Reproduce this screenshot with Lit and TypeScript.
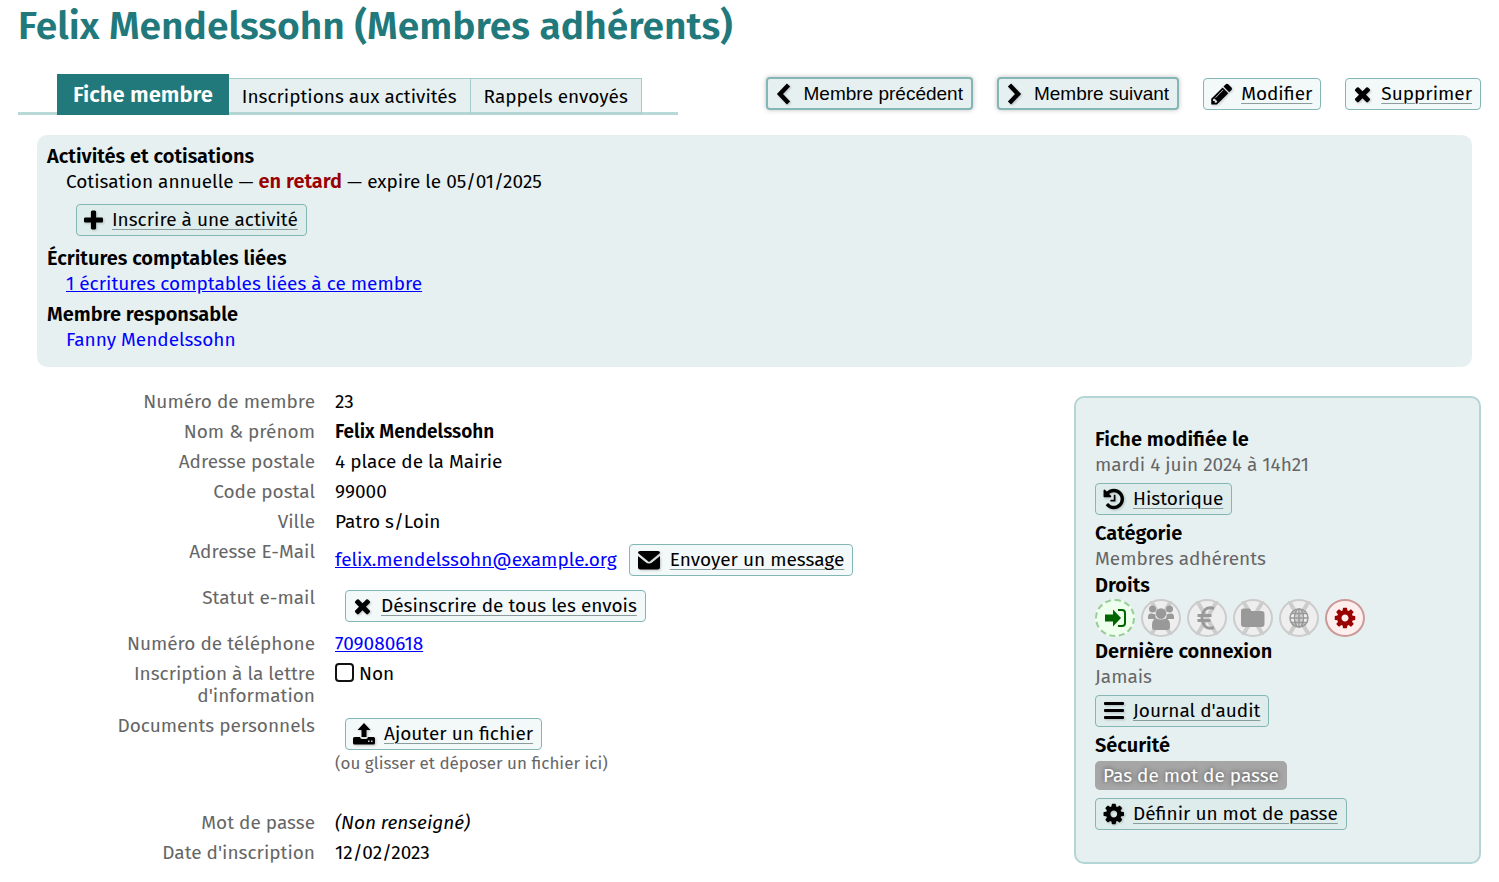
import { LitElement, html, svg, css } from "lit";
import { customElement } from "lit/decorators.js";

const COG = "M1152 896q0-106-75-181t-181-75-181 75-75 181 75 181 181 75 181-75 75-181zm512-109v222q0 12-8 23t-20 13l-185 28q-19 54-39 91 35 50 107 138 10 12 10 25t-9 23q-27 37-99 108t-94 71q-12 0-26-9l-138-108q-44 23-91 38-16 136-29 186-7 28-36 28h-222q-14 0-24.500-8.500t-11.500-21.500l-28-184q-49-16-90-37l-141 107q-10 9-25 9-14 0-25-11-126-114-165-168-7-10-7-23 0-12 8-23 15-21 51-66.500t54-70.500q-27-50-41-99l-183-27q-13-2-21-12.500t-8-23.500v-222q0-12 8-23t19-13l186-28q14-46 39-92-40-57-107-138-10-12-10-24 0-10 9-23 26-36 98.500-107.500t94.500-71.500q13 0 26 10l138 107q44-23 91-38 16-136 29-186 7-28 36-28h222q14 0 24.500 8.500t11.500 21.500l28 184q49 16 90 37l142-107q9-9 24-9 13 0 25 10 129 119 165 170 7 8 7 22 0 12-8 23-15 21-51 66.500t-54 70.500q26 50 41 98l183 28q13 2 21 12.500t8 23.500z";
const PLUS = "M1600 736v192q0 40-28 68t-68 28h-416v416q0 40-28 68t-68 28h-192q-40 0-68-28t-28-68v-416h-416q-40 0-68-28t-28-68v-192q0-40 28-68t68-28h416v-416q0-40 28-68t68-28h192q40 0 68 28t28 68v416h416q40 0 68 28t28 68z";
const CROSS = "M1490 1322q0 40-28 68l-136 136q-28 28-68 28t-68-28l-294-294-294 294q-28 28-68 28t-68-28l-136-136q-28-28-28-68t28-68l294-294-294-294q-28-28-28-68t28-68l136-136q28-28 68-28t68 28l294 294 294-294q28-28 68-28t68 28l136 136q28 28 28 68t-28 68l-294 294 294 294q28 28 28 68z";
const PENCIL = "M491 1536l91-91-235-235-91 91v107h128v128h107zm523-928q0-22-22-22-10 0-17 7l-542 542q-7 7-7 17 0 22 22 22 10 0 17-7l542-542q7-7 7-17zm-54-192l416 416-832 832h-416v-416zm683 96q0 53-37 90l-166 166-416-416 166-165q36-38 90-38 53 0 91 38l235 234q37 39 37 91z";
const HISTORY = "M1664 896q0 156-61 298t-164 245-245 164-298 61q-172 0-327-72.5t-264-204.500q-7-10-6.500-22.500t8.500-20.500l137-138q10-9 25-9 16 2 23 12 73 95 179 147t225 52q104 0 198.500-40.500t163.500-109.500 109.500-163.500 40.500-198.500-40.500-198.500-109.500-163.500-163.500-109.500-198.500-40.500q-98 0-188 35.500t-160 101.500l137 138q31 30 14 69-17 40-59 40h-448q-26 0-45-19t-19-45v-448q0-42 40-59 39-17 69 14l130 129q107-101 244.500-156.500t284.500-55.500q156 0 298 61t245 164 164 245 61 298zm-640-288v448q0 14-9 23t-23 9h-320q-14 0-23-9t-9-23v-64q0-14 9-23t23-9h224v-352q0-14 9-23t23-9h64q14 0 23 9t9 23z";

const line = (w: number, h: number, body: unknown, box = `0 0 ${w} ${h}`) =>
  html`<svg class="icon" width=${w} height=${h} viewBox=${box} aria-hidden="true">${body}</svg>`;

const icons = {
  prev: line(19, 22, svg`<path d="M13.500 2L5 11l8.500 9" fill="none" stroke="currentColor" stroke-width="4.500"/>`),
  next: line(19, 22, svg`<path d="M3.500 2L12 11l-8.500 9" fill="none" stroke="currentColor" stroke-width="4.500"/>`),
  pencil: line(21, 22, svg`<path d=${PENCIL}/>`, "110 128 1536 1536"),
  cross: line(19, 22, svg`<path d=${CROSS}/>`, "152 110 1488 1572"),
  plus: line(19, 22, svg`<path d=${PLUS}/>`, "192 64 1408 1536"),
  history: line(21, 22, svg`<path d=${HISTORY}/>`, "88 128 1576 1536"),
  cog: line(21, 22, svg`<path d=${COG}/>`, "88 128 1576 1536"),
  bars: line(21, 22, svg`<rect x="1" y="2" width="20" height="3" rx="1"/><rect x="1" y="9" width="20" height="3" rx="1"/><rect x="1" y="16" width="20" height="3" rx="1"/>`),
  mail: line(24, 22, svg`<path d="M3 2h18q2 0 2 2L12 13L1 4q0-2 2-2z"/><path d="M1 7l8 6.500q3 2.200 6 0L23 7v11q0 2.500-2.500 2.500h-17Q1 20.500 1 18z"/>`),
  upload: line(22, 22, svg`<path d="M11 0l6.500 7H13.500v7h-5V7H4.500z"/><path d="M1.500 14H7q.5 2 2 2h4q1.500 0 2-2h5.500q1.500 0 1.500 1.500V20q0 1.500-1.500 1.500h-19Q0 21.500 0 20v-4.500Q0 14 1.500 14zM15 17.500v1.500h1.500v-1.500zM18 17.500v1.500h1.500v-1.500z" fill-rule="evenodd"/>`),
};

const slash = svg`<path class="slash" d="M10 2L30 36M30 2L10 36" fill="none" stroke-width="4"/>`;
const right = (kind: string, label: string, body: unknown) =>
  html`<li class="right ${kind}" title=${label}><svg width="36" height="34" viewBox="2 2 36 34" role="img" aria-label=${label}>${kind === "off" ? slash : ""}${body}</svg></li>`;

@customElement("app-root")
export class AppRoot extends LitElement {
  static styles = css`
    :host {
      display: block;
      padding: 1px 18px 17px;
      color: #000;
      background: #fff;
      font: 19px/22px "Fira Sans", "Open Sans", sans-serif;
    }
    h1, dl, dd, ul { margin: 0; padding: 0; }
    ul { list-style: none; }
    h1 { font-size: 39px; line-height: 50px; font-weight: 600; color: #21797b; }
    a { color: #00f; }
    .bar { display: flex; justify-content: space-between; align-items: flex-start; margin-top: 23px; }
    .tabs { width: 660px; box-sizing: border-box; padding-left: 39px; display: flex; align-items: flex-end; border-bottom: 3px solid #b9d9d8; }
    .tabs a {
      display: block; padding: 3px 13px 0; line-height: 30px; margin-bottom: -3px;
      border: 1px solid #a3cccb; border-bottom: 3px solid #b3d5d4; border-left-width: 0;
      background: #e7f0f1; color: #000; text-decoration: none;
    }
    .tabs a.current { padding: 0 16px; line-height: 41px; border: 0; background: #21797b; color: #fff; font-size: 22px; font-weight: 600; }
    .actions { display: flex; align-items: center; gap: 24px; padding-top: 3px; }
    .btn {
      display: inline-flex; align-items: center; gap: 9px; box-sizing: border-box; height: 32px; padding: 0 8px 0 7px;
      border: 1px solid #83b6b5; border-radius: 4px; background: rgba(193, 221, 219, 0.2);
      color: #000; white-space: nowrap; text-decoration: none;
    }
    .btn span { text-decoration: underline 1px #8a9d9c; text-underline-offset: 3px; }
    button.btn { height: 33px; border-width: 2px; background: #e7f0f1; font: 19px/22px "Liberation Sans", sans-serif; box-shadow: 0 0 5px rgba(0, 0, 0, 0.25); }
    button.btn span { text-decoration: none; }
    .icon { flex: none; fill: currentColor; filter: drop-shadow(1px 1px 1px rgba(0, 0, 0, 0.2)); }
    .summary { margin: 20px 9px 0 19px; padding: 8px 10px 14px; border-radius: 10px; background: #e7f0f1; line-height: 26px; }
    .summary dt, .side dt { font-size: 20px; font-weight: 600; }
    .summary dd { margin-left: 19px; }
    .summary dd.last { margin-bottom: 4px; }
    .summary .btn { margin: 9px 10px; }
    .late { color: #900; font-size: 20px; line-height: 20px; font-weight: 600; }
    .plain { text-decoration: none; }
    .columns { display: flex; align-items: flex-start; gap: 20px; margin-top: 24px; }
    .details { flex: 1; display: grid; grid-template-columns: 297px 1fr; gap: 8px 20px; }
    .details dt { color: #666; text-align: right; padding-left: 80px; }
    .strong { font-weight: 600; }
    .mail { display: flex; align-items: center; gap: 12px; }
    .details .btn { margin: 3px 0; }
    .indent { padding-left: 10px; }
    .files { padding-bottom: 29px; }
    .hint { font-size: 17px; color: #666; }
    .check { display: flex; align-items: center; gap: 5px; }
    .check input { appearance: none; box-sizing: border-box; width: 19px; height: 19px; margin: 0 0 3px; border: 2px solid #111; border-radius: 4px; background: #fff; }
    .side { width: 407px; box-sizing: border-box; margin-top: 5px; padding: 28px 19px 27px; border: 2px solid #b3d5d4; border-radius: 10px; background: #e7f0f1; line-height: 26px; }
    .side dd { color: #666; }
    .side .btn { display: flex; width: fit-content; margin: 5px 0; }
    .rights { display: flex; gap: 6px; height: 40px; align-items: center; }
    .right { box-sizing: border-box; width: 40px; height: 38px; display: flex; border: 2px solid; border-radius: 50%; }
    .right.on { border: 2px dashed #99cc99; background: #eeffee; color: #060; fill: #060; }
    .right.off { border-color: #ccc; background: #eee; color: #999; fill: #999; }
    .right.admin { border-color: #cc9999; background: #fee; color: #900; fill: #900; }
    .slash { stroke: #ccc; }
    .badge { display: block; width: fit-content; margin: 3px 0 8px; padding: 0 8px; border-radius: 5px; line-height: 29px; background: #a6a6a6; color: #fff; text-shadow: 0 0 5px #444; }
  `;

  render() {
    return html`
      <h1>Felix Mendelssohn (Membres adhérents)</h1>
      <div class="bar">
        <nav class="tabs">
          <a class="current" href="#fiche">Fiche membre</a>
          <a href="#activites">Inscriptions aux activités</a>
          <a href="#rappels">Rappels envoyés</a>
        </nav>
        <div class="actions">
          <button class="btn" type="button">${icons.prev}<span>Membre précédent</span></button>
          <button class="btn" type="button">${icons.next}<span>Membre suivant</span></button>
          <a class="btn" href="#modifier">${icons.pencil}<span>Modifier</span></a>
          <a class="btn" href="#supprimer">${icons.cross}<span>Supprimer</span></a>
        </div>
      </div>

      <dl class="summary">
        <dt>Activités et cotisations</dt>
        <dd>Cotisation annuelle — <b class="late">en retard</b> — expire le 05/01/2025</dd>
        <dd><a class="btn" href="#inscrire">${icons.plus}<span>Inscrire à une activité</span></a></dd>
        <dt>Écritures comptables liées</dt>
        <dd class="last"><a href="#ecritures">1 écritures comptables liées à ce membre</a></dd>
        <dt>Membre responsable</dt>
        <dd><a class="plain" href="#fanny">Fanny Mendelssohn</a></dd>
      </dl>

      <div class="columns">
        <dl class="details">
          <dt>Numéro de membre</dt><dd>23</dd>
          <dt>Nom &amp; prénom</dt><dd class="strong">Felix Mendelssohn</dd>
          <dt>Adresse postale</dt><dd>4 place de la Mairie</dd>
          <dt>Code postal</dt><dd>99000</dd>
          <dt>Ville</dt><dd>Patro s/Loin</dd>
          <dt>Adresse E-Mail</dt>
          <dd class="mail"><a href="mailto:felix.mendelssohn@example.org">felix.mendelssohn@example.org</a><a class="btn" href="#message">${icons.mail}<span>Envoyer un message</span></a></dd>
          <dt>Statut e-mail</dt>
          <dd class="indent"><a class="btn" href="#desinscrire">${icons.cross}<span>Désinscrire de tous les envois</span></a></dd>
          <dt>Numéro de téléphone</dt><dd><a href="tel:709080618">709080618</a></dd>
          <dt>Inscription à la lettre d'information</dt>
          <dd><label class="check"><input type="checkbox" />Non</label></dd>
          <dt>Documents personnels</dt>
          <dd class="files">
            <div class="indent"><a class="btn" href="#ajouter">${icons.upload}<span>Ajouter un fichier</span></a></div>
            <div class="hint">(ou glisser et déposer un fichier ici)</div>
          </dd>
          <dt>Mot de passe</dt><dd><em>(Non renseigné)</em></dd>
          <dt>Date d'inscription</dt><dd>12/02/2023</dd>
        </dl>

        <aside class="side">
          <dl>
            <dt>Fiche modifiée le</dt>
            <dd>mardi 4 juin 2024 à 14h21</dd>
            <dd><a class="btn" href="#historique">${icons.history}<span>Historique</span></a></dd>
            <dt>Catégorie</dt>
            <dd>Membres adhérents</dd>
            <dt>Droits</dt>
            <dd>
              <ul class="rights">
                ${right("on", "Connexion", svg`<path d="M10 15.500h8v-5l8 8.500-8 8.500v-5h-8z"/><path d="M23 11h4q3 0 3 3v10q0 3-3 3h-4" fill="none" stroke="currentColor" stroke-width="2"/>`)}
                ${right("off", "Membres", svg`<circle cx="11.500" cy="10" r="3.500"/><circle cx="28.500" cy="10" r="3.500"/><path d="M7 20v-2q0-4 3.500-3.500 3 .5 4 1-.5 3 1 4.500zM33 20v-2q0-4-3.500-3.500-3 .5-4 1 .5 3-1 4.500z"/><circle cx="20" cy="14.500" r="5.200"/><path d="M11 26q0-6 4.500-6.500 4.500 2.500 9 0Q29 20 29 26v2q0 3-3 3H14q-3 0-3-3z"/>`)}
                ${right("off", "Comptabilité", svg`<path d="M27 9.500q-10.500-3.500-12 9.500 1.500 13 12 9.500M10.500 16.500h14M10.500 21.500h13" fill="none" stroke="currentColor" stroke-width="3"/>`)}
                ${right("off", "Documents", svg`<path d="M10 9.500h6q2 0 2 2.500h10.500q3 0 3 3v10q0 3-3 3h-18q-2.500 0-2.500-3V12q0-2.500 2-2.500z"/>`)}
                ${right("off", "Site web", svg`<g fill="none" stroke="currentColor" stroke-width="1.500"><circle cx="20" cy="19" r="9"/><ellipse cx="20" cy="19" rx="4.500" ry="9"/><path d="M20 10v18M11 19h18M12.500 14.500h15M12.500 23.500h15"/></g>`)}
                ${right("admin", "Configuration", svg`<svg x="9.500" y="8.500" width="21" height="21" viewBox="128 128 1536 1536"><path d=${COG}/></svg>`)}
              </ul>
            </dd>
            <dt>Dernière connexion</dt>
            <dd>Jamais</dd>
            <dd><a class="btn" href="#audit">${icons.bars}<span>Journal d'audit</span></a></dd>
            <dt>Sécurité</dt>
            <dd><span class="badge">Pas de mot de passe</span></dd>
            <dd><a class="btn" href="#motdepasse">${icons.cog}<span>Définir un mot de passe</span></a></dd>
          </dl>
        </aside>
      </div>
    `;
  }
}
